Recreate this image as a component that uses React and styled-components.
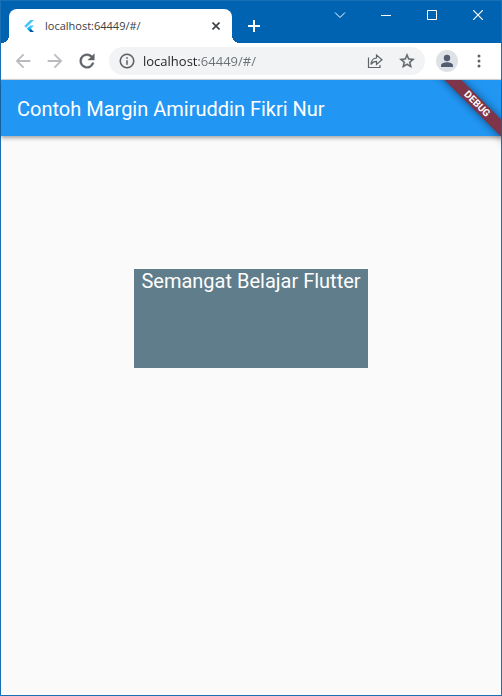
import React from "react";
import styled, { createGlobalStyle } from "styled-components";

const GlobalStyle = createGlobalStyle`
  *, *::before, *::after { box-sizing: border-box; }
  body { margin: 0; }
  button { border: 0; padding: 0; margin: 0; background: none; color: inherit; font: inherit; }
  svg { display: block; }
`;

const Window = styled.div`
  display: flex;
  flex-direction: column;
  min-height: 100vh;
  border: 1px solid #1a70b5;
  background: #fafafa;
  font-family: "Open Sans", "Noto Sans", sans-serif;
`;

const TitleBar = styled.header`
  display: flex;
  align-items: flex-end;
  height: 42px;
  padding-left: 8px;
  background: #0063b1;
  color: #fff;
`;

const Tab = styled.div`
  position: relative;
  display: flex;
  align-items: center;
  flex: 0 1 223px;
  min-width: 0;
  height: 34px;
  padding: 0 8px 0 12px;
  border-radius: 8px 8px 0 0;
  background: #fff;
  color: #3c4043;

  &::before,
  &::after {
    content: "";
    position: absolute;
    bottom: 0;
    width: 8px;
    height: 8px;
  }
  &::before {
    right: 100%;
    background: radial-gradient(circle at 0 0, transparent 8px, #fff 8px);
  }
  &::after {
    left: 100%;
    background: radial-gradient(circle at 100% 0, transparent 8px, #fff 8px);
  }
`;

const TabTitle = styled.span`
  flex: 1;
  min-width: 0;
  margin-left: 8px;
  overflow: hidden;
  white-space: nowrap;
  font-size: 11px;
  line-height: 16px;
`;

const IconButton = styled.button`
  display: flex;
  align-items: center;
  justify-content: center;
  flex: none;
  width: ${(p) => p.$width || 32}px;
  height: ${(p) => p.$height || 28}px;
  color: ${(p) => p.$color || "#5f6368"};
`;

const WindowControls = styled.div`
  display: flex;
  align-self: flex-start;
  margin-left: auto;
`;

const Toolbar = styled.nav`
  display: flex;
  align-items: center;
  height: 37px;
  padding: 0 6px;
  border-bottom: 1px solid #d5d7da;
  background: #fff;
`;

const AddressBar = styled.label`
  display: flex;
  align-items: center;
  flex: 1;
  min-width: 0;
  height: 28px;
  margin: 0 6px;
  padding: 0 2px 0 9px;
  border-radius: 14px;
  background: #f1f3f4;
  color: #5f6368;
`;

const AddressInput = styled.input`
  flex: 1;
  min-width: 0;
  height: 20px;
  margin: 0 0 0 7px;
  padding: 0;
  border: 0;
  outline: 0;
  font: 13px/20px "Open Sans", "Noto Sans", sans-serif;
  color: #202124;
  background: linear-gradient(90deg, #202124 56px, #6b6f74 56px);
  background-clip: text;
  -webkit-text-fill-color: transparent;
`;

const Avatar = styled.span`
  display: flex;
  width: 22px;
  height: 22px;
  border-radius: 50%;
  background: #dee1e6;
  color: #545d70;
`;

const Page = styled.main`
  position: relative;
  flex: 1;
  font-family: Roboto, sans-serif;
  color: #fff;
`;

const AppBar = styled.div`
  display: flex;
  align-items: center;
  height: 56px;
  padding: 2px 16px 0;
  background: #2196f3;
  box-shadow: 0 2px 4px rgba(0, 0, 0, 0.35);
`;

const AppTitle = styled.h1`
  margin: 0;
  font-size: 20px;
  line-height: 24px;
  font-weight: 400;
`;

const BannerCorner = styled.div`
  position: absolute;
  top: 0;
  right: 0;
  width: 80px;
  height: 80px;
  overflow: hidden;
  pointer-events: none;
`;

const Banner = styled.div`
  position: absolute;
  top: 18px;
  right: -26px;
  width: 100px;
  height: 12px;
  transform: rotate(45deg);
  background: #7e3449;
  box-shadow: 0 0 8px rgba(0, 0, 0, 0.5);
  font-size: 10px;
  line-height: 12px;
  font-weight: 700;
  text-align: center;
`;

const Card = styled.p`
  width: fit-content;
  min-height: 99px;
  margin: 133px auto 0;
  padding: 0 7px;
  background: #607d8b;
  font-size: 20px;
  line-height: 24px;
`;

const FlutterLogo = () => (
  <svg width="16" height="16" viewBox="0 0 32 32" aria-hidden="true">
    <path d="M18.6 4 6.5 16l3.8 3.7L26 4zM18.6 15.1 12.1 21.5l3.8 3.8L26 15.1z" fill="#47c5fb" />
    <path d="m15.9 25.3 2.7 2.7H26l-6.4-6.4z" fill="#00569e" />
    <path d="m12.1 21.5 3.8-3.7 3.7 3.7-3.7 3.8z" fill="#00b5f8" />
  </svg>
);

const Stroke = ({ size, d, width = 1 }) => (
  <svg width={size} height={size} viewBox={`0 0 ${size} ${size}`} fill="none" stroke="currentColor" strokeWidth={width} aria-hidden="true">
    <path d={d} />
  </svg>
);

const Solid = ({ size, d, edge = 0 }) => (
  <svg width={size} height={size} viewBox="0 0 24 24" fill="currentColor" stroke="currentColor" strokeWidth={edge} aria-hidden="true">
    <path d={d} />
  </svg>
);

const backPath = "M20 11H7.83l5.59-5.59L12 4l-8 8 8 8 1.41-1.41L7.83 13H20z";
const forwardPath = "M4 11h12.17l-5.58-5.59L12 4l8 8-8 8-1.41-1.41L16.17 13H4z";
const reloadPath =
  "M17.65 6.35A7.96 7.96 0 0 0 12 4a8 8 0 1 0 7.73 10h-2.3A5.8 5.8 0 1 1 12 6.2c1.6 0 3.1.7 4.2 1.7L13 11h7V4z";
const infoPath =
  "M11 7h2v2h-2zm0 4h2v6h-2zm1-9a10 10 0 1 0 0 20 10 10 0 0 0 0-20zm0 18a8 8 0 1 1 0-16 8 8 0 0 1 0 16z";
const starPath =
  "m22 9.24-7.19-.62L12 2 9.19 8.63 2 9.24l5.46 4.73L5.82 21 12 17.27 18.18 21l-1.63-7.03zM12 15.4l-3.76 2.27 1-4.28-3.32-2.88 4.38-.38L12 6.1l1.71 4.04 4.38.38-3.32 2.88 1 4.28z";
const sharePath =
  "M1.5 4.5v10h11.5V12M4 11.500C4.300 7.500 6.200 5.200 9.500 5V2l5.500 4.700-5.500 4.800V8.400C7 8.400 5.300 9.300 4 11.500z";

export default function App() {
  return (
    <>
      <GlobalStyle />
      <Window>
        <TitleBar>
          <Tab>
            <FlutterLogo />
            <TabTitle>localhost:64449/#/</TabTitle>
            <IconButton $width={16} $height={16} $color="#3c4043" aria-label="Close tab">
              <Stroke size={8} width={1.6} d="M.5.5l7 7M7.5.5l-7 7" />
            </IconButton>
          </Tab>
          <IconButton $width={44} $height={34} $color="#fff" aria-label="New tab">
            <Stroke size={12} width={2} d="M6 0v12M0 6h12" />
          </IconButton>
          <WindowControls>
            <IconButton $width={46} $color="#fff" aria-label="Search tabs">
              <Stroke size={12} d="m1 3.5 5 5 5-5" />
            </IconButton>
            <IconButton $width={46} $color="#fff" aria-label="Minimize">
              <Stroke size={10} d="M0 5.5h10" />
            </IconButton>
            <IconButton $width={46} $color="#fff" aria-label="Maximize">
              <Stroke size={10} d="M.5.5h9v9h-9z" />
            </IconButton>
            <IconButton $width={46} $color="#fff" aria-label="Close window">
              <Stroke size={10} width={1.2} d="m0 0 10 10M10 0 0 10" />
            </IconButton>
          </WindowControls>
        </TitleBar>

        <Toolbar aria-label="Browser toolbar">
          <IconButton $color="#b9bbbe" aria-label="Back">
            <Solid size={22} d={backPath} />
          </IconButton>
          <IconButton $color="#b9bbbe" aria-label="Forward">
            <Solid size={22} d={forwardPath} />
          </IconButton>
          <IconButton aria-label="Reload">
            <Solid size={22} edge={0.4} d={reloadPath} />
          </IconButton>
          <AddressBar>
            <Solid size={18} edge={0.1} d={infoPath} />
            <AddressInput type="text" aria-label="Address" defaultValue="localhost:64449/#/" spellCheck={false} />
            <IconButton aria-label="Share">
              <Stroke size={16} width={1.2} d={sharePath} />
            </IconButton>
            <IconButton aria-label="Bookmark this page">
              <Solid size={18} edge={0.5} d={starPath} />
            </IconButton>
          </AddressBar>
          <IconButton aria-label="Profile">
            <Avatar>
              <svg width="22" height="22" viewBox="0 0 22 22" fill="currentColor" aria-hidden="true">
                <circle cx="11" cy="8" r="3.2" />
                <path d="M5 17v-1.600c0-2.200 3.500-3.200 6-3.200s6 1 6 3.200V17z" />
              </svg>
            </Avatar>
          </IconButton>
          <IconButton aria-label="Menu">
            <svg width="4" height="14" viewBox="0 0 4 14" fill="currentColor" aria-hidden="true">
              <circle cx="2" cy="2" r="1.5" />
              <circle cx="2" cy="7" r="1.5" />
              <circle cx="2" cy="12" r="1.5" />
            </svg>
          </IconButton>
        </Toolbar>

        <Page>
          <AppBar>
            <AppTitle>Contoh Margin Amiruddin Fikri Nur</AppTitle>
          </AppBar>
          <Card>Semangat Belajar Flutter</Card>
          <BannerCorner>
            <Banner>DEBUG</Banner>
          </BannerCorner>
        </Page>
      </Window>
    </>
  );
}
